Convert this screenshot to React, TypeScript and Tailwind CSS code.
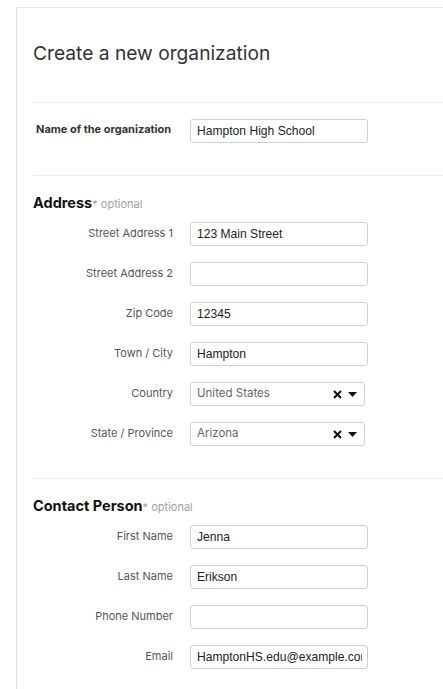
import React from "react";

type Field = { label: string; value?: string; select?: boolean };

const address: Field[] = [
  { label: "Street Address 1", value: "123 Main Street" },
  { label: "Street Address 2" },
  { label: "Zip Code", value: "12345" },
  { label: "Town / City", value: "Hampton" },
  { label: "Country", value: "United States", select: true },
  { label: "State / Province", value: "Arizona", select: true },
];

const contact: Field[] = [
  { label: "First Name", value: "Jenna" },
  { label: "Last Name", value: "Erikson" },
  { label: "Phone Number" },
  { label: "Email", value: "HamptonHS.edu@example.com" },
];

const inter = "font-['Inter','Noto_Sans',sans-serif]";
const arial = "font-['Liberation_Sans',Arial,sans-serif]";

function TextInput({ value }: { value?: string }) {
  return (
    <div className="h-[24px] w-[178px] shrink-0 rounded-[3px] border border-[#cfcfcf] bg-white pl-[6px] pr-[5px]">
      <div
        className={`overflow-hidden text-[12.1px] leading-[22px] whitespace-nowrap text-[#222] ${arial}`}
      >
        {value}
      </div>
    </div>
  );
}

function SelectInput({ value }: { value?: string }) {
  return (
    <div
      className={`flex h-[24px] w-[175px] shrink-0 items-center rounded-[3px] border border-[#cfcfcf] bg-white pl-[6px] pr-[7px] ${inter}`}
    >
      <span className="flex-1 text-[11.5px] text-[#666]">{value}</span>
      <svg width="9" height="9" viewBox="0 0 9 9" className="mr-[6px]">
        <path d="M1 1 L8 8 M8 1 L1 8" stroke="#111" strokeWidth="2" />
      </svg>
      <svg width="9" height="5" viewBox="0 0 9 5">
        <path d="M0 0 H9 L4.5 5 Z" fill="#111" />
      </svg>
    </div>
  );
}

function Row({ field }: { field: Field }) {
  return (
    <div className="flex items-start gap-[17px]">
      <div
        className={`w-[140px] shrink-0 pt-[3px] text-right text-[11px] leading-[16px] text-[#555] ${inter}`}
      >
        {field.label}
      </div>
      {field.select ? (
        <SelectInput value={field.value} />
      ) : (
        <TextInput value={field.value} />
      )}
    </div>
  );
}

function SectionTitle({ title }: { title: string }) {
  return (
    <div className={`flex items-baseline ${inter}`}>
      <span className="text-[14.5px] leading-[20px] font-bold text-[#111]">
        {title}
      </span>
      <span className="text-[11px] text-[#a0a0a0]">* optional</span>
    </div>
  );
}

export default function App() {
  return (
    <div className="h-[689px] w-[443px] overflow-hidden bg-white">
      <div className="mt-[7px] ml-[16px] h-[700px] w-[600px] border-t border-l border-[#e2e2e2] pl-[16px]">
        <h1
          className={`pt-[31px] text-[19.2px] leading-[28px] font-normal text-[#333] ${inter}`}
        >
          Create a new organization
        </h1>

        <div className="mt-[35px] border-t border-[#ececec]" />

        <div className="mt-[16px] flex items-start gap-[17px]">
          <div
            className={`w-[140px] shrink-0 pt-[2px] pl-[3px] text-[11px] leading-[16px] font-bold text-[#333] ${inter}`}
          >
            Name of the organization
          </div>
          <TextInput value="Hampton High School" />
        </div>

        <div className="mt-[32px] border-t border-[#ececec]" />

        <div className="mt-[17px]">
          <SectionTitle title="Address" />
        </div>
        <div className="mt-[9px] flex flex-col gap-[16px]">
          {address.map((f) => (
            <Row key={f.label} field={f} />
          ))}
        </div>

        <div className="mt-[32px] border-t border-[#ececec]" />

        <div className="mt-[17px]">
          <SectionTitle title="Contact Person" />
        </div>
        <div className="mt-[9px] flex flex-col gap-[16px]">
          {contact.map((f) => (
            <Row key={f.label} field={f} />
          ))}
        </div>
      </div>
    </div>
  );
}
